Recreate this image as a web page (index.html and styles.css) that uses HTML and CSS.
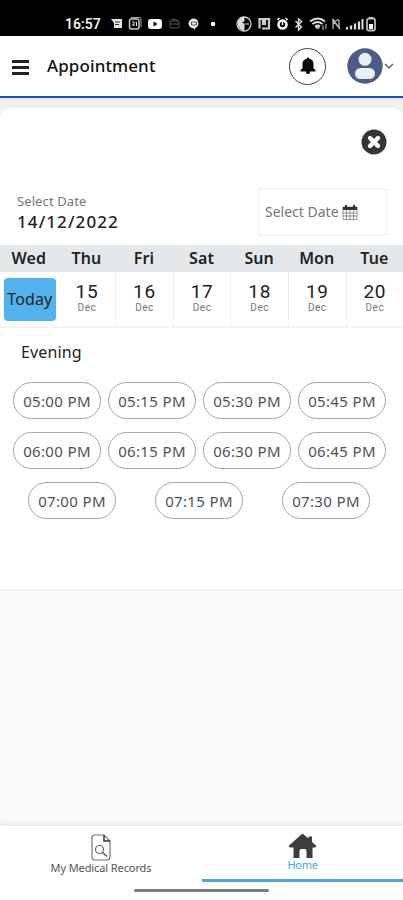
FILE: index.html
```html
<!DOCTYPE html>
<html lang="en">
<head>
<meta charset="utf-8">
<meta name="viewport" content="width=device-width">
<title>Appointment</title>
<link rel="stylesheet" href="styles.css">
</head>
<body>
<div class="status">
  <span class="clock">16:57</span>
  <svg class="status-left" width="106" height="16" viewBox="0 0 106 16">
    <path d="M1 3h11v9H4v-5z" fill="#e6e6e6"/><path d="M5 6h5M5 8.500h4" stroke="#333"/>
    <rect x="19.500" y="3" width="9.500" height="10" rx="2" fill="none" stroke="#ccc" stroke-width="1.500"/><path d="M21 1.500h8.500q1.500 0 1.500 1.500v8" fill="none" stroke="#aaa"/><path d="M22 6h2v4M25.500 6h1v4M22 9h2" fill="none" stroke="#ddd"/>
    <rect x="38" y="3" width="14" height="10" rx="3" fill="#fff"/><path d="M43.500 5.500v5l4-2.500z" fill="#000"/>
    <path d="M60 5h9v7h-9zM60 8h9M62 5V3.500h5V5" fill="none" stroke="#555"/>
    <path d="M84 2.500a5.500 5 0 0 1 2 9L84 14v-1.500a5.500 5 0 0 1 0-10z" fill="#eee"/><path d="M81.500 6h5v3h-5z" fill="none" stroke="#555"/>
    <circle cx="103" cy="8" r="2.300" fill="#fff"/>
  </svg>
  <svg class="status-right" width="144" height="18" viewBox="0 0 144 18">
    <circle cx="8" cy="9" r="7" fill="none" stroke="#ccc" stroke-width="1.300"/><path d="M2 7q3-5 6-5v4l-3 1 3 2v6Q2 14 2 7M9 9h4" fill="#ddd" stroke="#ddd"/>
    <path d="M23.500 13.500V4h3.500v6M26 13.500h7V4h-4v6" fill="none" stroke="#ccc" stroke-width="2.200"/>
    <circle cx="46.500" cy="9.500" r="4" fill="none" stroke="#fff" stroke-width="2.600"/><path d="M41.500 5l2-2M51.500 5l-2-2M46.500 7v3" stroke="#fff" stroke-width="1.500"/>
    <path d="M59.500 6l6 6-3 3V4l3 2.500-6 6" fill="none" stroke="#ddd" stroke-width="1.400"/>
    <path d="M74 6.500q8-6 15 0M76.500 9q5-4 10 0M79 11.500q3-2 5 0" fill="none" stroke="#ddd" stroke-width="1.900"/><path d="M81.500 14l-2-2h4zM87 10v5M90 9v5" fill="#ddd" stroke="#ccc"/>
    <path d="M97 14V5l6 8V5M97 4l7 10M98 9q4-7 5-3" fill="none" stroke="#bbb" stroke-width="1.300"/>
    <path d="M111 12v2.500M115 10.500v4M119 8.500v6M123 6.500v8" stroke="#ddd" stroke-width="2.200"/><path d="M126.500 4v10.500" stroke="#ddd" stroke-width="2"/>
    <rect x="131" y="3.500" width="8" height="12" rx="2" fill="none" stroke="#bbb" stroke-width="1.800"/><path d="M133 2.500h4" stroke="#ccc"/><path d="M133 9h4v5h-4z" fill="#fff"/>
  </svg>
</div>
<header class="topbar">
  <span class="burger"><i></i><i></i><i></i></span>
  <h1>Appointment</h1>
  <span class="bell"><svg width="16" height="18" viewBox="0 0 16 18"><path d="M8 0.500c.8 0 1.200.5 1.200 1.200C12.500 2.400 13.500 4.500 13.500 7v4l2 2.300v1.200H.5v-1.200l2-2.300V7c0-2.500 1-4.600 4.300-5.300C6.800 1 7.200.5 8 .5zM6 14h4v1c0 1.500-.8 2-2 2s-2-.5-2-2z" fill="#0b0b0b"/></svg></span>
  <svg class="avatar" width="36" height="36" viewBox="0 0 36 36"><circle cx="18" cy="18" r="17.700" fill="#4e5b85"/><circle cx="18" cy="11.300" r="6.500" fill="#e6f1f3"/><rect x="8" y="20" width="20" height="11" rx="5.500" fill="#e6f1f3"/></svg>
  <svg class="chevron" width="10" height="6" viewBox="0 0 10 6"><path d="M1 1l4 4 4-4" fill="none" stroke="#555" stroke-width="1.200"/></svg>
</header>
<main>
  <section class="card">
    <div class="close"><svg width="26" height="26" viewBox="0 0 26 26"><circle cx="13" cy="13" r="12.500" fill="#343537"/><path d="M9 9l8 8M17 9l-8 8" stroke="#fff" stroke-width="4.400" stroke-linecap="round"/></svg></div>
    <div class="date-row">
      <div><div class="label">Select Date</div><div class="date">14/12/2022</div></div>
      <div class="picker"><span class="label">Select Date</span><svg width="16" height="17" viewBox="0 0 16 17"><path d="M1 3h14v12.500H1zM1 9h14M1 12h14M4.500 6v9.500M8 6v9.500M11.500 6v9.500" fill="none" stroke="#777" stroke-width=".8"/><path d="M1 3h14v3H1zM3 1h2v4H3zM11 1h2v4h-2z" fill="#333"/></svg></div>
    </div>
    <div class="week names"><span>Wed</span><span>Thu</span><span>Fri</span><span>Sat</span><span>Sun</span><span>Mon</span><span>Tue</span></div>
    <div class="week days">
      <div class="first"><b class="today">Today</b></div>
      <div class="second"><b>15</b><small>Dec</small></div>
      <div><b>16</b><small>Dec</small></div>
      <div><b>17</b><small>Dec</small></div>
      <div><b>18</b><small>Dec</small></div>
      <div><b>19</b><small>Dec</small></div>
      <div><b>20</b><small>Dec</small></div>
    </div>
    <h2>Evening</h2>
    <div class="slots">
      <div class="slot-row"><button>05:00 PM</button><button>05:15 PM</button><button>05:30 PM</button><button>05:45 PM</button></div>
      <div class="slot-row"><button>06:00 PM</button><button>06:15 PM</button><button>06:30 PM</button><button>06:45 PM</button></div>
      <div class="slot-row last"><button>07:00 PM</button><button>07:15 PM</button><button>07:30 PM</button></div>
    </div>
  </section>
</main>
<nav>
  <a class="records"><svg width="20" height="27" viewBox="0 0 20 27"><path d="M3 1h10l6 6v16q0 3-3 3H4q-3 0-3-3V4q0-3 3-3" fill="none" stroke="#777" stroke-width="1.200"/><path d="M13 1v6h6" fill="none" stroke="#333" stroke-width="1.500"/><circle cx="8.500" cy="15.500" r="4" fill="none" stroke="#666" stroke-width="1.200"/><path d="M11.500 18.500l4.500 4" stroke="#555" stroke-width="1.500"/></svg><span>My Medical Records</span></a>
  <a class="home"><svg width="29" height="26" viewBox="0 0 29 26"><path d="M14.500 0.500L20.500 5.500V3.500H24V9l4.500 4-1.500 1.500h-2.500V25h-6v-7q0-2-2-2h-3q-2 0-2 2v7h-6V14.500H2L.5 13z" fill="#3b3d3f"/></svg><span>Home</span></a>
  <div class="gesture"></div>
</nav>
</body>
</html>
```
FILE: styles.css
```css
* { box-sizing: border-box; }
body {
  margin: 0;
  width: 403px;
  height: 900px;
  display: flex;
  flex-direction: column;
  overflow: hidden;
  background: #fafafa;
  color: #222;
  font-family: "Noto Sans", sans-serif;
}
svg { display: block; flex: none; }
.status {
  height: 36px;
  flex: none;
  background: #000;
  color: #eee;
  display: flex;
  align-items: flex-start;
  padding: 16px 0 0 65px;
}
.clock { font: 600 14px/17px Roboto, sans-serif; width: 45px; white-space: nowrap; }
.status-right { margin: -1px 0 0 20px; }
.topbar {
  height: 62px;
  flex: none;
  background: #fff;
  border-bottom: 2px solid #1b4fb8;
  display: flex;
  align-items: center;
  padding-left: 12px;
}
.burger { display: flex; flex-direction: column; gap: 3px; width: 17px; margin-top: 2px; }
.burger i { height: 3px; background: #222; }
h1 { margin: 0 0 0 18px; width: 242px; font-size: 17px; line-height: 24px; font-weight: 500; letter-spacing: .1px; color: #111; }
.bell { width: 37px; height: 37px; border: 1px solid #444; border-radius: 50%; display: flex; align-items: center; justify-content: center; }
.avatar { margin-left: 21px; }
.chevron { margin-left: 1px; }
main { flex: 1; padding-top: 10px; background: linear-gradient(#e6e9ef 0, #f1f1f1 8px, #f1f1f1 20px, #fafafa 30px); }
.card { height: 482px; background: #fff; border-radius: 10px 10px 0 0; border-bottom: 1px solid #eaeaea; }
.close { padding: 21px 16px 0 0; display: flex; justify-content: flex-end; }
.date-row { display: flex; justify-content: space-between; padding: 33px 15px 0 17px; height: 90px; }
.label { font-size: 13px; line-height: 18px; color: #777; letter-spacing: .1px; white-space: nowrap; }
.date-row > div:first-child { padding-top: 4px; }
.date { padding-top: 1px; font-size: 17px; line-height: 22px; font-weight: 500; letter-spacing: 1.1px; }
.picker { width: 130px; height: 48px; border: 2px solid #f5f5f5; display: flex; align-items: center; padding-left: 5px; gap: 3px; }
.picker .label { font-size: 14px; letter-spacing: 0; }
.week { display: grid; grid-template-columns: repeat(7, 57.6px); }
.names { height: 27px; background: #e4e8eb; font-size: 16px; line-height: 27px; font-weight: 600; text-align: center; letter-spacing: .1px; overflow: hidden; }
.days { height: 56px; border-bottom: 2px solid #f4f4f4; overflow: hidden; }
.days > div { display: flex; flex-direction: column; align-items: center; padding-top: 9px; border-left: 1px solid #efefef; }
.days > .second { border-color: transparent; }
.days > .first { padding: 6px 0 0 2px; border: 0; }
.days b { font: 400 19px/22px Roboto, sans-serif; letter-spacing: .7px; }
.days small { font: 10px/12px Roboto, sans-serif; letter-spacing: .5px; color: #777; margin-top: -1px; }
.days .today { width: 52px; height: 43px; border-radius: 4px; background: #53b2ec; font: 400 16px/43px "Noto Sans", sans-serif; text-align: center; letter-spacing: .1px; }
h2 { margin: 13px 0 0 21px; font-size: 16px; line-height: 22px; font-weight: 400; letter-spacing: .15px; }
.slots { padding: 19px 17px 0 13px; display: flex; flex-direction: column; gap: 13px; }
.slot-row { display: flex; justify-content: space-between; }
.slot-row.last { padding: 0 16px 0 15px; }
button { width: 88px; height: 37px; padding: 0; border: 1px solid #a5a5a5; border-radius: 19px; background: #fff; color: #505057; font: 400 15px/20px "Noto Sans", sans-serif; letter-spacing: .35px; white-space: nowrap; }
nav { position: relative; height: 74px; flex: none; display: grid; grid-template-columns: 202px 1fr; background: #fff; box-shadow: 0 -2px 6px #e2e2e2; }
nav a { height: 56px; display: flex; flex-direction: column; align-items: center; padding-top: 8px; font-size: 11px; line-height: 14px; color: #555; }
.records span { letter-spacing: -.1px; }
.home { padding-top: 7px; border-bottom: 3px solid #48a8d8; color: #48a8d0; }
.home span { margin-top: -1px; letter-spacing: -.3px; }
.gesture { position: absolute; left: 134px; top: 63px; width: 135px; height: 3px; border-radius: 2px; background: #7c7c7c; }
```
